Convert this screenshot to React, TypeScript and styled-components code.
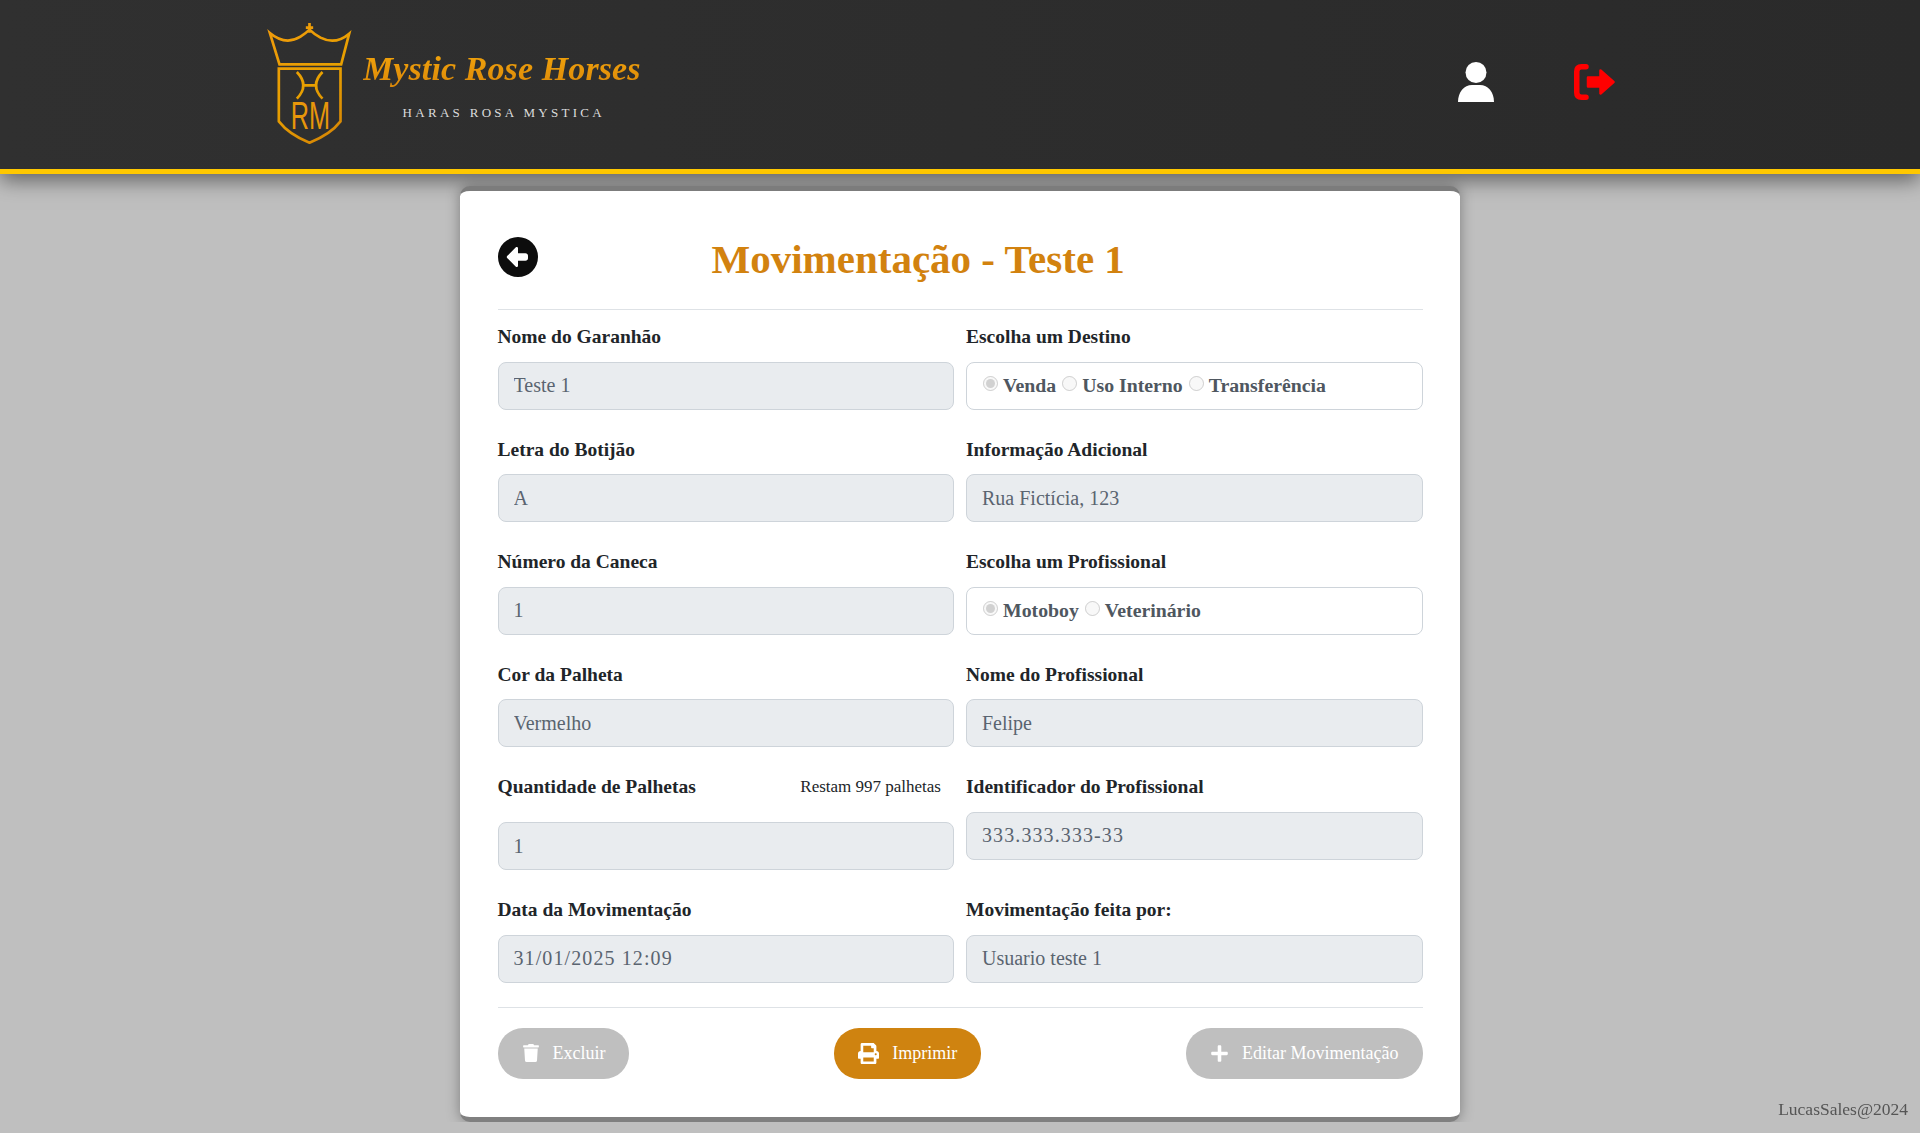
import React from 'react'
import styled, { createGlobalStyle } from 'styled-components'
import { FaPlus, FaPrint, FaTrash } from 'react-icons/fa'
import { FaCircleLeft } from 'react-icons/fa6'

const GlobalStyle = createGlobalStyle`
  * {
    box-sizing: border-box;
  }

  body {
    margin: 0;
    background: #bfbfbf;
    font-family: "Liberation Serif", "Times New Roman", serif;
  }
`

const Logo: React.FC = () => (
  <LogoMark viewBox="80 65 260 375">
    <defs>
      <linearGradient id="gold" gradientUnits="userSpaceOnUse" x1="80" y1="65" x2="340" y2="440">
        <stop offset="0" stopColor="#f09a0c" />
        <stop offset="0.5" stopColor="#e8a000" />
        <stop offset="1" stopColor="#d17f06" />
      </linearGradient>
    </defs>
    <g fill="none" stroke="url(#gold)" strokeWidth="8">
      <path d="M88 101 Q135 140 180 112 Q197 101 207 91 Q220 104 240 115 Q285 138 326 103 L302 195 H117 Z" />
      <path d="M207 71 V100 M196 85 H218" />
      <path d="M115 208 H300 V366 Q270 405 207 430 Q145 405 115 366 Z" />
      <path d="M169 218 Q208 258 169 298 M246 218 Q207 258 246 298 M190 258 H225" />
    </g>
    <text
      x="151"
      y="390"
      fontFamily="Liberation Sans, sans-serif"
      fontSize="118"
      fill="#e8960a"
      textLength="118"
      lengthAdjust="spacingAndGlyphs"
    >
      RM
    </text>
  </LogoMark>
)

const UserIcon: React.FC = () => (
  <svg width="36" height="40" viewBox="0 0 36 40" fill="#fff">
    <circle cx="18" cy="10.5" r="10.5" />
    <path d="M0 40 C0 30 6 23 14 23 H22 C30 23 36 30 36 40 Z" />
  </svg>
)

const ExitIcon: React.FC = () => (
  <svg width="41" height="36" viewBox="0 0 41 36" fill="#ff0000">
    <path
      d="M12 2.75 H7.5 Q2.75 2.75 2.75 7.5 V28.5 Q2.75 33.25 7.5 33.25 H12"
      fill="none"
      stroke="#ff0000"
      strokeWidth="5.5"
      strokeLinecap="round"
    />
    <path
      d="M14 13.5 H26.5 V6.5 L39.5 18 L26.5 29.5 V22.5 H14 Z"
      stroke="#ff0000"
      strokeWidth="2.5"
      strokeLinejoin="round"
    />
  </svg>
)

type FieldData = {
  label: string
  value?: string
  note?: string
  options?: string[]
  numeric?: boolean
}

const fields: FieldData[] = [
  { label: 'Nome do Garanhão', value: 'Teste 1' },
  { label: 'Escolha um Destino', options: ['Venda', 'Uso Interno', 'Transferência'] },
  { label: 'Letra do Botijão', value: 'A' },
  { label: 'Informação Adicional', value: 'Rua Fictícia, 123' },
  { label: 'Número da Caneca', value: '1' },
  { label: 'Escolha um Profissional', options: ['Motoboy', 'Veterinário'] },
  { label: 'Cor da Palheta', value: 'Vermelho' },
  { label: 'Nome do Profissional', value: 'Felipe' },
  { label: 'Quantidade de Palhetas', value: '1', note: 'Restam 997 palhetas' },
  { label: 'Identificador do Profissional', value: '333.333.333-33', numeric: true },
  { label: 'Data da Movimentação', value: '31/01/2025 12:09', numeric: true },
  { label: 'Movimentação feita por:', value: 'Usuario teste 1' },
]

const App: React.FC = () => {
  return (
    <>
      <GlobalStyle />
      <Header>
        <Brand>
          <Logo />
          <BrandText>
            <BrandName>Mystic Rose Horses</BrandName>
            <BrandSub>HARAS ROSA MYSTICA</BrandSub>
          </BrandText>
        </Brand>
        <HeaderIcons>
          <UserIcon />
          <ExitIcon />
        </HeaderIcons>
      </Header>

      <Card>
        <CardTop>
          <FaCircleLeft size={40} color="#0d0d0d" />
          <Title>Movimentação - Teste 1</Title>
        </CardTop>

        <FormGrid>
          {fields.map((field) => (
            <Field key={field.label}>
              <LabelRow $tall={!!field.note}>
                <Label>{field.label}</Label>
                {field.note && <Note>{field.note}</Note>}
              </LabelRow>
              {field.options ? (
                <RadioBox>
                  {field.options.map((option, index) => (
                    <RadioLabel key={option}>
                      <Radio type="radio" disabled defaultChecked={index === 0} name={field.label} />
                      {option}
                    </RadioLabel>
                  ))}
                </RadioBox>
              ) : (
                <Input disabled value={field.value} readOnly $numeric={field.numeric} />
              )}
            </Field>
          ))}
        </FormGrid>

        <Actions>
          <ActionButton>
            <FaTrash size={18} />
            Excluir
          </ActionButton>
          <ActionButton $primary>
            <FaPrint size={21} />
            Imprimir
          </ActionButton>
          <ActionButton>
            <FaPlus size={19} />
            Editar Movimentação
          </ActionButton>
        </Actions>
      </Card>

      <Credit>LucasSales@2024</Credit>
    </>
  )
}

const Header = styled.header`
  display: flex;
  align-items: center;
  justify-content: space-between;
  height: 174px;
  padding: 0 305px 0 267px;
  background: linear-gradient(90deg, #303030, #2a2a2a);
  border-bottom: 5px solid #ffc800;
  box-shadow: 0 6px 20px rgba(0, 0, 0, 0.5);
`

const Brand = styled.div`
  display: flex;
  align-items: flex-start;
  gap: 9px;
`

const LogoMark = styled.svg`
  width: 87px;
  height: 125px;
  margin-bottom: 2px;
`

const BrandText = styled.div`
  display: flex;
  flex-direction: column;
  align-items: center;
  padding-top: 24px;
`

const BrandName = styled.span`
  font-size: 34px;
  font-style: italic;
  font-weight: 700;
  line-height: 48px;
  letter-spacing: 0.1px;
  white-space: nowrap;
  background: linear-gradient(180deg, #f5a90c, #d98408);
  -webkit-background-clip: text;
  background-clip: text;
  color: transparent;
`

const BrandSub = styled.span`
  margin: 12px 0 0 4px;
  font-size: 13px;
  letter-spacing: 3.3px;
  color: #dcdcdc;
`

const HeaderIcons = styled.div`
  display: flex;
  align-items: center;
  gap: 80px;
  margin-bottom: 5px;
`

const Card = styled.main`
  width: 1000px;
  margin: 12px auto 0;
  padding: 37px 37.5px 38px;
  background: #fff;
  border-top: 5px solid #7c7c7c;
  border-bottom: 5px solid #808080;
  border-radius: 10px;
  box-shadow: 0 0 14px rgba(0, 0, 0, 0.35);
`

const CardTop = styled.div`
  display: flex;
  align-items: flex-start;
  height: 82px;
  border-bottom: 1px solid #dee2e6;
  margin-bottom: 15px;
  padding-top: 9px;
`

const Title = styled.h1`
  margin: 0 0 0 174px;
  font-size: 41px;
  font-weight: 700;
  line-height: 45px;
  color: #d2820f;
  white-space: nowrap;
`

const FormGrid = styled.div`
  display: grid;
  grid-template-columns: 1fr 1fr;
  column-gap: 12px;
  row-gap: 28.1px;
  align-items: start;
`

const Field = styled.div`
  display: flex;
  flex-direction: column;
`

const LabelRow = styled.div<{ $tall: boolean }>`
  display: flex;
  align-items: flex-start;
  justify-content: space-between;
  height: ${(props) => (props.$tall ? '47px' : '36.5px')};
  padding-right: 13px;
`

const Label = styled.label`
  font-size: 19.5px;
  font-weight: 700;
  line-height: 24px;
  color: #212529;
`

const Note = styled.small`
  font-size: 17px;
  line-height: 24px;
  color: #212529;
`

const Input = styled.input<{ $numeric?: boolean }>`
  width: 100%;
  height: 48px;
  padding: 8px 15px;
  font-family: inherit;
  font-size: 20px;
  line-height: 30px;
  letter-spacing: ${(props) => (props.$numeric ? '1.1px' : 'normal')};
  color: #5a6470;
  -webkit-text-fill-color: #5a6470;
  opacity: 1;
  background: #e9ecef;
  border: 1px solid #ced4da;
  border-radius: 8px;
`

const RadioBox = styled.div`
  display: flex;
  align-items: center;
  gap: 6px;
  height: 48px;
  padding: 0 16px;
  background: #fff;
  border: 1px solid #ced4da;
  border-radius: 8px;
`

const RadioLabel = styled.label`
  display: flex;
  align-items: center;
  gap: 5px;
  font-size: 19.8px;
  font-weight: 700;
  color: #4f5760;
`

const Radio = styled.input`
  width: 15px;
  height: 15px;
  margin: 0 0 4px;
`

const Actions = styled.div`
  display: flex;
  justify-content: space-between;
  margin-top: 24px;
  padding-top: 20px;
  border-top: 1px solid #dee2e6;
`

const ActionButton = styled.button<{ $primary?: boolean }>`
  display: flex;
  align-items: center;
  gap: 13px;
  height: 51px;
  padding: 0 24px;
  font-family: inherit;
  font-size: 18px;
  color: #fff;
  background: ${(props) => (props.$primary ? '#cf8310' : '#bfbfbf')};
  border: 0;
  border-radius: 25px;
`

const Credit = styled.div`
  position: fixed;
  right: 12px;
  bottom: 13px;
  font-size: 17.5px;
  color: #555;
`

export default App
